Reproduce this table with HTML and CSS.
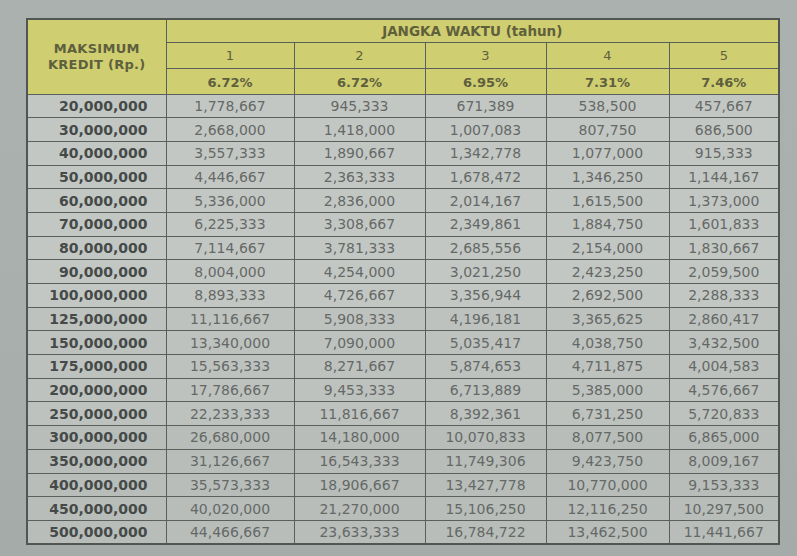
FILE: index.html
```
<!DOCTYPE html>
<html>
<head>
<meta charset="utf-8">
<link rel="stylesheet" href="styles.css">
</head>
<body>
<div class="page">
<table class="kredit">
<colgroup>
<col class="c0"><col class="c1"><col class="c2"><col class="c3"><col class="c4"><col class="c5">
</colgroup>
<thead>
<tr class="h1">
<th rowspan="3" class="maks">MAKSIMUM<br>KREDIT (Rp.)</th>
<th colspan="5" class="jangka">JANGKA WAKTU (tahun)</th>
</tr>
<tr class="h2"><th>1</th><th>2</th><th>3</th><th>4</th><th>5</th></tr>
<tr class="h3"><th>6.72%</th><th>6.72%</th><th>6.95%</th><th>7.31%</th><th>7.46%</th></tr>
</thead>
<tbody>
<tr><td>20,000,000</td><td>1,778,667</td><td>945,333</td><td>671,389</td><td>538,500</td><td>457,667</td></tr>
<tr><td>30,000,000</td><td>2,668,000</td><td>1,418,000</td><td>1,007,083</td><td>807,750</td><td>686,500</td></tr>
<tr><td>40,000,000</td><td>3,557,333</td><td>1,890,667</td><td>1,342,778</td><td>1,077,000</td><td>915,333</td></tr>
<tr><td>50,000,000</td><td>4,446,667</td><td>2,363,333</td><td>1,678,472</td><td>1,346,250</td><td>1,144,167</td></tr>
<tr><td>60,000,000</td><td>5,336,000</td><td>2,836,000</td><td>2,014,167</td><td>1,615,500</td><td>1,373,000</td></tr>
<tr><td>70,000,000</td><td>6,225,333</td><td>3,308,667</td><td>2,349,861</td><td>1,884,750</td><td>1,601,833</td></tr>
<tr><td>80,000,000</td><td>7,114,667</td><td>3,781,333</td><td>2,685,556</td><td>2,154,000</td><td>1,830,667</td></tr>
<tr><td>90,000,000</td><td>8,004,000</td><td>4,254,000</td><td>3,021,250</td><td>2,423,250</td><td>2,059,500</td></tr>
<tr><td>100,000,000</td><td>8,893,333</td><td>4,726,667</td><td>3,356,944</td><td>2,692,500</td><td>2,288,333</td></tr>
<tr><td>125,000,000</td><td>11,116,667</td><td>5,908,333</td><td>4,196,181</td><td>3,365,625</td><td>2,860,417</td></tr>
<tr><td>150,000,000</td><td>13,340,000</td><td>7,090,000</td><td>5,035,417</td><td>4,038,750</td><td>3,432,500</td></tr>
<tr><td>175,000,000</td><td>15,563,333</td><td>8,271,667</td><td>5,874,653</td><td>4,711,875</td><td>4,004,583</td></tr>
<tr><td>200,000,000</td><td>17,786,667</td><td>9,453,333</td><td>6,713,889</td><td>5,385,000</td><td>4,576,667</td></tr>
<tr><td>250,000,000</td><td>22,233,333</td><td>11,816,667</td><td>8,392,361</td><td>6,731,250</td><td>5,720,833</td></tr>
<tr><td>300,000,000</td><td>26,680,000</td><td>14,180,000</td><td>10,070,833</td><td>8,077,500</td><td>6,865,000</td></tr>
<tr><td>350,000,000</td><td>31,126,667</td><td>16,543,333</td><td>11,749,306</td><td>9,423,750</td><td>8,009,167</td></tr>
<tr><td>400,000,000</td><td>35,573,333</td><td>18,906,667</td><td>13,427,778</td><td>10,770,000</td><td>9,153,333</td></tr>
<tr><td>450,000,000</td><td>40,020,000</td><td>21,270,000</td><td>15,106,250</td><td>12,116,250</td><td>10,297,500</td></tr>
<tr><td>500,000,000</td><td>44,466,667</td><td>23,633,333</td><td>16,784,722</td><td>13,462,500</td><td>11,441,667</td></tr>
</tbody>
</table>
</div>
</body>
</html>
```
FILE: styles.css
```
html, body {
  margin: 0;
  padding: 0;
}
body {
  width: 797px;
  height: 556px;
  overflow: hidden;
  background: linear-gradient(180deg, #abb1af 0%, #a8afac 60%, #a4aba8 100%);
  font-family: "DejaVu Sans", Verdana, sans-serif;
}
.page {
  padding: 18px 0 0 26px;
}
.kredit {
  border-collapse: collapse;
  table-layout: fixed;
  width: 752px;
  border: 2px solid #515653;
}
.c0 { width: 139px; }
.c1 { width: 128px; }
.c2 { width: 131px; }
.c3 { width: 121px; }
.c4 { width: 123px; }
.c5 { width: 110px; }
.kredit th,
.kredit td {
  border: 1.5px solid #5a5f5b;
  padding: 0;
  white-space: nowrap;
}
.kredit thead th {
  background: #cfce70;
  color: #5e5f3e;
  text-align: center;
  font-size: 13px;
}
.h1 { height: 23px; }
.h2 { height: 26px; }
.h3 { height: 26px; }
.h1 .jangka {
  font-weight: bold;
  font-size: 13.5px;
  color: #5f603c;
}
.h2 th {
  font-weight: normal;
  font-size: 14px;
}
.h3 th {
  font-weight: bold;
  font-size: 13px;
  padding-top: 2px;
}
.maks {
  font-weight: bold;
  font-size: 12.5px;
  line-height: 16px;
  letter-spacing: 0.3px;
  color: #717250;
  padding-bottom: 14px;
}
.kredit tbody tr {
  height: 23.7px;
}
.kredit tbody td {
  background: #c3c7c4;
  color: #656966;
  font-size: 14px;
  text-align: center;
}
.kredit tbody tr:nth-child(n+10) td { background: #bec2bf; }
.kredit tbody tr:nth-child(n+15) td { background: #b8bdba; }
.kredit tbody td:first-child {
  font-weight: bold;
  color: #454a48;
  text-align: right;
  padding-right: 18px;
}
```
